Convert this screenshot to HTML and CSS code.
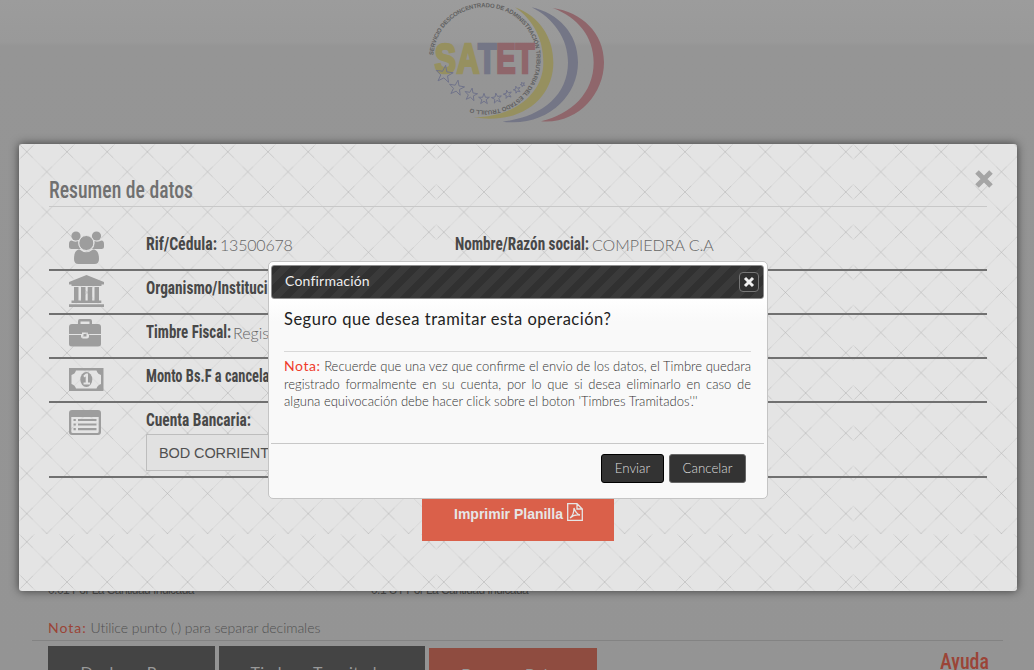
FILE: index.html
```html
<!DOCTYPE html>
<html lang="es">
<head>
<meta charset="utf-8">
<title>SATET - Confirmación</title>
<link rel="stylesheet" href="styles.css">
</head>
<body>
<div class="page">
  <header class="brand">
    <svg class="logo" viewBox="0 0 660 390">
      <defs>
        <path id="ring" d="M70 166A155 155 0 1 1 187 327"/>
        <path id="star" d="M0-1L.24-.31.95-.31.38.12.59.81 0 .4-.59.81-.38.12-.95-.31-.24-.31Z" vector-effect="non-scaling-stroke"/>
      </defs>
      <path fill="#96905f" d="M315 22C385 48 430 108 430 188C430 290 340 376 190 352C310 352 400 282 400 188C400 118 370 60 315 22Z"/>
      <path fill="#747686" d="M365 22C445 40 504 100 504 187C504 290 410 382 278 365C390 352 474 290 474 187C474 115 430 55 365 22Z"/>
      <path fill="#8f666b" d="M428 24C515 35 582 100 582 187C582 285 500 374 393 364C485 342 551 280 551 187C551 110 503 52 428 24Z"/>
      <text class="ring-text" textLength="764"><textPath href="#ring" textLength="764">SERVICIO DESCONCENTRADO DE ADMINISTRACIÓN TRIBUTARIA DEL ESTADO TRUJILL O</textPath></text>
      <g class="name">
        <text x="74" y="220" fill="#96905f" stroke="#96905f" textLength="64" lengthAdjust="spacingAndGlyphs">S</text>
        <text x="140" y="220" fill="#96905f" stroke="#96905f" textLength="68" lengthAdjust="spacingAndGlyphs">A</text>
        <text x="204" y="220" fill="#747686" stroke="#747686" textLength="55" lengthAdjust="spacingAndGlyphs">T</text>
        <text x="259" y="220" fill="#8f666b" stroke="#8f666b" textLength="58" lengthAdjust="spacingAndGlyphs">E</text>
        <text x="317" y="220" fill="#8f666b" stroke="#8f666b" textLength="56" lengthAdjust="spacingAndGlyphs">T</text>
      </g>
      <g class="stars">
        <use href="#star" transform="translate(103 223) rotate(8) scale(27)"/>
        <use href="#star" transform="translate(140 264) rotate(10) scale(24)"/>
        <use href="#star" transform="translate(183 284) rotate(10) scale(20)"/>
        <use href="#star" transform="translate(222 297) scale(17)"/>
        <use href="#star" transform="translate(260 295) rotate(-10) scale(16)"/>
        <use href="#star" transform="translate(293 283) rotate(-15) scale(13)"/>
        <use href="#star" transform="translate(321 269) rotate(-20) scale(11)"/>
        <use href="#star" transform="translate(338 253) rotate(-25) scale(7)"/>
      </g>
    </svg>
  </header>
  <main class="form">
    <div class="hints"><span>0.01 Por La Cantidad Indicada</span><span>0.1 UT Por La Cantidad Indicada</span></div>
    <p class="tip"><b>Nota:</b> Utilice punto (.) para separar decimales</p>
    <div class="actions">
      <span class="act dark w1">Declarar Pago</span><span class="act dark w2">Timbres Tramitados</span><span class="act red">Procesar Datos</span>
      <svg class="help" width="50" height="30"><text class="cond" x="0" y="22" font-size="22" textLength="49" lengthAdjust="spacingAndGlyphs">Ayuda</text></svg>
    </div>
  </main>
</div>

<section class="modal">
  <svg class="weave" width="998" height="447">
    <defs>
      <pattern id="cell" x="7.8" y="7.8" width="40.2" height="40.2" patternUnits="userSpaceOnUse">
        <path class="faint" d="M0 0L40.2 40.2M0 40.2L40.2 0"/>
        <path class="firm" d="M0 0l6 6M40.2 0l-6 6M0 40.2l6-6M40.2 40.2l-6-6M15 15l10 10M15 25l10-10"/>
      </pattern>
      <pattern id="tile" width="417" height="390" patternUnits="userSpaceOnUse"><rect width="417" height="390" fill="url(#cell)"/></pattern>
    </defs>
    <rect width="998" height="447" fill="url(#tile)"/>
  </svg>
  <div class="content">
    <div class="heading">
      <svg width="160" height="40"><text class="cond title" x="0" y="31" textLength="144" lengthAdjust="spacingAndGlyphs">Resumen de datos</text></svg>
      <svg class="close" width="18" height="18" viewBox="0 0 18 18"><path d="M2 2L16 16M16 2L2 16"/></svg>
    </div>
    <div class="row first">
      <svg class="icon" width="35" height="34" viewBox="0 0 35 34"><circle cx="7" cy="5" r="4.6"/><circle cx="27.500" cy="5" r="4.600"/><path d="M0 16V13Q0 9.500 2.500 9.500Q6 11.500 9.300 10Q9 15 11.800 18H2.500Q0 18 0 16ZM35 16V13Q35 9.500 32.500 9.500Q29 11.500 25.500 10Q26 15 23 18H32.500Q35 18 35 16Z"/><circle class="halo" cx="17.300" cy="12" r="7.500"/><path d="M5 28C5 22 7 18.500 10.500 18.500Q17.300 24 24 18.500C28 18.500 30 22 30 28Q30 33 25.500 33H9.500Q5 33 5 28Z"/></svg>
      <svg class="label" width="74" height="30"><text class="cond" x="0" y="21" textLength="71" lengthAdjust="spacingAndGlyphs">Rif/Cédula:</text></svg>
      <span class="value rif">13500678</span>
      <svg class="label" width="137" height="30"><text class="cond" x="0" y="21" textLength="134" lengthAdjust="spacingAndGlyphs">Nombre/Razón social:</text></svg>
      <span class="value">COMPIEDRA C.A</span>
    </div>
    <div class="row">
      <svg class="icon" width="35" height="33" viewBox="0 0 35 33"><path d="M17.500 0L35 7V9.500H32.500V11H2.500V9.500H0V7ZM5 12H9.500V25.500H12V12H16.500V25.500H18.700V12H23.200V25.500H25.500V12H30V25.500H32.300V28H2.500V25.500H5ZM0 29.300H35V32H0Z"/></svg>
      <svg class="label" width="190" height="30"><text class="cond" x="0" y="21" textLength="141" lengthAdjust="spacingAndGlyphs">Organismo/Institución:</text></svg>
    </div>
    <div class="row">
      <svg class="icon" width="35" height="28" viewBox="0 0 35 28"><path fill-rule="evenodd" d="M9 5V2Q9 0 11 0H21Q23 0 23 2V5H29Q32 5 32 8V15H19V13.500H13V15H0V8Q0 5 3 5ZM11.500 5H20.500V2.500H11.500ZM0 16H12V17.500Q12 19.500 14 19.500H18Q20 19.500 20 17.500V16H32V25Q32 27.500 29 27.500H3Q0 27.500 0 25ZM14.500 15H17.500V17.500H14.500Z"/></svg>
      <svg class="label" width="87" height="30"><text class="cond" x="0" y="21" textLength="85" lengthAdjust="spacingAndGlyphs">Timbre Fiscal:</text></svg>
      <span class="value">Registro</span>
    </div>
    <div class="row">
      <svg class="icon low" width="35" height="24" viewBox="0 0 35 24"><path fill-rule="evenodd" d="M0 0H34.500V23H0ZM7 2.500Q6 6 2.500 7V16Q6 17 7 20.500H27.500Q28.500 17 32 16V7Q28.500 6 27.500 2.500Z"/><ellipse cx="17.300" cy="11.500" rx="6" ry="7.500"/><path class="cut" d="M14.500 7.500L17 5.500H19V14.500H21V16.500H14.500V14.500H16.700V8.500L15 9.500Z"/></svg>
      <svg class="label" width="190" height="30"><text class="cond" x="0" y="21" textLength="132" lengthAdjust="spacingAndGlyphs">Monto Bs.F a cancelar:</text></svg>
    </div>
    <div class="row bank">
      <svg class="icon" width="35" height="26" viewBox="0 0 35 26"><path fill-rule="evenodd" d="M3 0H29Q32 0 32 3V22Q32 25 29 25H3Q0 25 0 22V3Q0 0 3 0ZM2.300 7V21.500Q2.300 23 3.800 23H28.200Q29.700 23 29.700 21.500V7ZM4.500 9H6.800V11H4.500ZM9 9H27.500V11H9ZM4.500 13.500H6.800V15.500H4.500ZM9 13.500H27.500V15.500H9ZM4.500 18H6.800V20.200H4.500ZM9 18H27.500V20.200H9Z"/></svg>
      <div class="account">
        <svg class="label" width="110" height="30"><text class="cond" x="0" y="21" textLength="105" lengthAdjust="spacingAndGlyphs">Cuenta Bancaria:</text></svg>
        <div class="select">BOD CORRIENTE</div>
      </div>
    </div>
    <div class="print">Imprimir Planilla
      <svg width="16" height="18" viewBox="0 0 16 18"><path d="M.7.700H10L15.300 6V17.300H.700ZM10 .7V6H15.300M3 15Q7 12 7 5Q9 11 13 12Q7 11 3 15"/></svg>
    </div>
  </div>
</section>

<section class="dialog">
  <div class="bar"><span>Confirmación</span><span class="x"><svg width="12" height="12" viewBox="0 0 12 12"><path d="M2 2L10 10M10 2L2 10"/></svg></span></div>
  <div class="message">
    <h2>Seguro que desea tramitar esta operación?</h2>
    <p><b>Nota:</b> Recuerde que una vez que confirme el envio de los datos, el Timbre quedara registrado formalmente en su cuenta, por lo que si desea eliminarlo en caso de alguna equivocación debe hacer click sobre el boton 'Timbres Tramitados'.''</p>
  </div>
  <div class="buttons"><span class="btn focus">Enviar</span><span class="btn">Cancelar</span></div>
</section>
</body>
</html>
```
FILE: styles.css
```css
* { box-sizing: border-box; }
body { margin: 0; width: 1034px; height: 670px; overflow: hidden; font-family: Lato, sans-serif; }
svg { display: block; flex: none; }

.page { height: 670px; overflow: hidden; background: linear-gradient(#9c9c9c 0, #999 42px, #959595 46px, #949494 100%); }
.brand { height: 582px; padding-left: 410px; }
.logo { width: 220px; height: 130px; }
.ring-text { font: 700 18px "Liberation Sans", sans-serif; fill: #606060; }
.name { font: 700 128px "Liberation Sans", sans-serif; stroke-width: 8px; }
.stars { fill: none; stroke: #70738a; stroke-width: 1px; }

.form { padding-left: 48px; }
.hints { display: flex; height: 36px; font: 12px/17px "Liberation Sans", sans-serif; letter-spacing: -.56px; color: #505050; }
.hints span { width: 323px; }
.tip { margin: 0 31px 0 -16px; padding-left: 16px; height: 23px; border-bottom: 1px solid #838383; font-size: 14px; line-height: 20px; font-weight: 300; letter-spacing: -.06px; color: #505050; }
.tip b { font-weight: 400; letter-spacing: 1px; color: #9b4437; }
.actions { display: flex; gap: 4px; padding-top: 5px; }
.act { height: 50px; padding-top: 16px; text-align: center; font-size: 16px; line-height: 20px; letter-spacing: .35px; color: #999; }
.dark { background: #444; }
.w1 { width: 167px; }
.w2 { width: 206px; }
.red { width: 168px; margin-top: 2px; background: #8f4c40; font: 700 14px/20px "Liberation Sans", sans-serif; letter-spacing: 0; }
.help { margin: 1px 0 0 339px; fill: #9b4437; }

.cond { font-family: "Roboto Condensed", "Open Sans Condensed", Roboto, sans-serif; font-weight: 500; }
.modal { position: absolute; left: 19px; top: 144px; width: 998px; height: 447px; border-radius: 3px; background: #e4e4e4; box-shadow: 0 0 10px rgba(0,0,0,.6); overflow: visible; }
.weave { position: absolute; inset: 0; }
.faint, .firm { fill: none; stroke: #b5b5b5; stroke-width: .6px; opacity: .45; }
.firm { stroke: #aaa; opacity: .6; }
.content { position: relative; padding: 23px 30px 0; }
.heading { display: flex; justify-content: space-between; height: 40px; border-bottom: 1px solid #c8c8c8; }
.title { font-size: 24px; font-weight: 500; fill: #707070; }
.close { margin: 3px -6px 0 0; fill: none; stroke: #a5a5a5; stroke-width: 5px; }
.row { display: flex; height: 44px; padding: 4px 0 0 20px; border-bottom: 2px solid #707070; }
.first { height: 64px; padding-top: 24px; }
.bank { height: 75px; padding-top: 5px; }
.icon { margin-right: 42px; fill: #9d9d9d; }
.halo { stroke: #e4e4e4; stroke-width: 1px; }
.low { margin-top: 5px; }
.bank .icon { margin-top: 2px; }
.cut { fill: #e4e4e4; }
.label { font-size: 18px; fill: #484848; }
.label text { font-weight: 700; }
.row .label { margin-top: -2px; }
.account .label { margin-bottom: -1px; }
.row .account .label { margin-top: -3px; }
.value { font-size: 16px; line-height: 27px; font-weight: 300; color: #666; }
.rif { width: 235px; letter-spacing: -.2px; }
.select { margin-top: -1px; width: 300px; height: 37px; border: 1px solid #bdbdbd; padding-left: 12px; background: #e1e1e1; font: 14.5px/36px "Liberation Sans", sans-serif; letter-spacing: -.1px; color: #505050; }
.print { display: flex; align-items: flex-start; gap: 4px; margin: 0 0 0 373px; width: 192px; height: 63px; padding: 26px 0 0 32px; background: #da604a; color: #e6e6e6; font: 700 14px/20px "Liberation Sans", sans-serif; white-space: nowrap; }
.print svg { margin-top: -1px; fill: none; stroke: #e6e6e6; stroke-width: 1.3px; }

.dialog { position: absolute; left: 268px; top: 261px; width: 500px; height: 238px; padding: 3px; border: 1px solid #c4c4c4; border-radius: 5px; background: linear-gradient(#fff 0, #fff 36px, #f9f9f9 60px); }
.bar { display: flex; align-items: center; justify-content: space-between; height: 34px; margin-left: -1px; padding: 0 4px 0 13px; border: 1px solid #8d8d8d; border-radius: 3px; background: repeating-linear-gradient(135deg, #313131 0 7.07px, #3a3a3a 7.07px 14.14px); color: #eee; font-size: 14px; line-height: 16px; letter-spacing: .2px; }
.bar > span:first-child { margin-top: -2px; }
.x { display: grid; place-items: center; width: 20px; height: 20px; border: 1px solid #777; border-radius: 4px; background: #303030; }
.x path { stroke: #f0f0f0; stroke-width: 3px; }
.message { height: 144px; padding: 10px 13px 0 12px; }
.message h2 { height: 43px; margin: 0 0 6px; border-bottom: 1px solid #d8d8d8; font-size: 16.5px; line-height: 20px; font-weight: 400; letter-spacing: .5px; color: #222; }
.message p { margin: 0; font-size: 13px; line-height: 17.5px; font-weight: 300; color: #333; text-align: justify; }
.message b { font-weight: 400; font-size: 14px; line-height: 14px; letter-spacing: .55px; color: #ef3b2b; }
.buttons { display: flex; justify-content: flex-end; gap: 5px; padding: 10px 18px 0 0; border-top: 1px solid #c8c8c8; margin-left: -1px; }
.btn { width: 77px; height: 29px; border: 1px solid #666; border-radius: 3px; background: #333; color: #ddd; text-align: center; font-size: 13.3px; line-height: 26px; font-weight: 300; }
.focus { width: 63px; border-color: #000; }
```
